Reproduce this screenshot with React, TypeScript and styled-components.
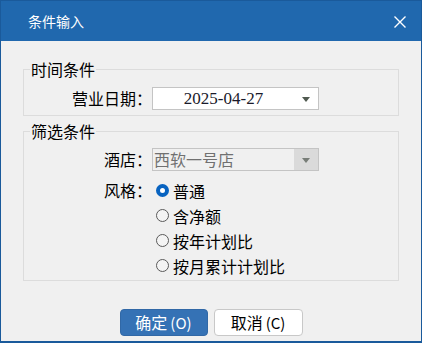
import React from 'react';
import styled, { createGlobalStyle } from 'styled-components';

const GlobalStyle = createGlobalStyle`
  html, body {
    margin: 0;
    padding: 0;
    background: #f0f0f0;
  }
  body {
    font-family: "Noto Sans CJK SC", "Noto Sans", sans-serif;
  }
`;

const styles = ['普通', '含净额', '按年计划比', '按月累计计划比'];

const App: React.FC = () => {
  const [style, setStyle] = React.useState(0);

  return (
    <>
      <GlobalStyle />
      <Window>
        <TitleBar>
          <Title>条件输入</Title>
          <CloseButton aria-label="关闭">
            <svg width="12" height="12" viewBox="0 0 12 12">
              <path d="M0.5 0.5 L11.5 11.5 M11.5 0.5 L0.5 11.5" stroke="#fff" strokeWidth="1.4" />
            </svg>
          </CloseButton>
        </TitleBar>

        <Body>
          <Group $pt={7} $pb={4}>
            <Legend>时间条件</Legend>
            <FormGrid>
              <Label>营业日期：</Label>
              <Combo>
                <DateValue>2025-04-27</DateValue>
                <ArrowBox>
                  <Arrow />
                </ArrowBox>
              </Combo>
            </FormGrid>
          </Group>

          <Group $pt={6} $pb={2}>
            <Legend>筛选条件</Legend>
            <FormGrid>
              <Label>酒店：</Label>
              <Combo $disabled>
                <HotelValue>西软一号店</HotelValue>
                <ArrowBox $disabled>
                  <Arrow $disabled />
                </ArrowBox>
              </Combo>
              <Label $top>风格：</Label>
              <RadioList>
                {styles.map((s, i) => (
                  <RadioRow key={s} onClick={() => setStyle(i)}>
                    <RadioDot $checked={style === i} />
                    <span>{s}</span>
                  </RadioRow>
                ))}
              </RadioList>
            </FormGrid>
          </Group>
        </Body>

        <Footer>
          <Button $primary>
            确定<Hotkey>(O)</Hotkey>
          </Button>
          <Button>
            取消<Hotkey>(C)</Hotkey>
          </Button>
        </Footer>
      </Window>
    </>
  );
};

const Window = styled.div`
  width: 422px;
  height: 343px;
  box-sizing: border-box;
  border: 1px solid #1a5a9b;
  border-bottom-width: 2px;
  background: #f0f0f0;
  display: flex;
  flex-direction: column;
  color: #000;
`;

const TitleBar = styled.div`
  height: 40px;
  flex-shrink: 0;
  background: #2068ae;
  display: flex;
  align-items: center;
  justify-content: space-between;
  padding: 0 15px 0 27px;
`;

const Title = styled.span`
  color: #fff;
  font-size: 14px;
  line-height: 20px;
`;

const CloseButton = styled.div`
  width: 12px;
  height: 12px;
  display: flex;
  margin-top: 1px;
`;

const Body = styled.div`
  padding: 18px 22px 0;
  display: flex;
  flex-direction: column;
  gap: 5px;
`;

const Group = styled.fieldset<{ $pt: number; $pb: number }>`
  margin: 0;
  min-width: 0;
  border: 1px solid #dcdcdc;
  padding: ${(p) => p.$pt}px 0 ${(p) => p.$pb}px;
`;

const Legend = styled.legend`
  margin-left: 6px;
  padding: 0 1px;
  font-size: 16px;
  line-height: 20px;
  color: #000;
`;

const FormGrid = styled.div`
  display: grid;
  grid-template-columns: 128px 167px;
  row-gap: 6px;
  align-items: center;
`;

const Label = styled.div<{ $top?: boolean }>`
  font-size: 16px;
  line-height: 25px;
  text-align: right;
  align-self: ${(p) => (p.$top ? 'start' : 'center')};
`;

const Combo = styled.div<{ $disabled?: boolean }>`
  height: 23px;
  box-sizing: border-box;
  border: 1px solid #c4c4c4;
  background: ${(p) => (p.$disabled ? '#f0f0f0' : '#fff')};
  display: flex;
  align-items: stretch;
`;

const DateValue = styled.div`
  flex: 1;
  text-align: center;
  font-family: "Liberation Serif", serif;
  font-size: 17px;
  line-height: 21px;
  color: #1a1a2a;
`;

const HotelValue = styled.div`
  flex: 1;
  padding-left: 1px;
  font-size: 16px;
  line-height: 21px;
  color: #707070;
`;

const ArrowBox = styled.div<{ $disabled?: boolean }>`
  width: 24px;
  display: flex;
  align-items: center;
  justify-content: center;
  background: ${(p) => (p.$disabled ? '#dadada' : 'transparent')};
`;

const Arrow = styled.div<{ $disabled?: boolean }>`
  width: 0;
  height: 0;
  border-left: 4.5px solid transparent;
  border-right: 4.5px solid transparent;
  border-top: 5px solid ${(p) => (p.$disabled ? '#777d77' : '#505a50')};
  margin-top: 1px;
`;

const RadioList = styled.div`
  display: flex;
  flex-direction: column;
`;

const RadioRow = styled.label`
  height: 25px;
  display: flex;
  align-items: center;
  gap: 4px;
  padding-left: 4px;
  font-size: 16px;
  cursor: default;
`;

const RadioDot = styled.span<{ $checked: boolean }>`
  width: 13px;
  height: 13px;
  box-sizing: border-box;
  border-radius: 50%;
  flex-shrink: 0;
  border: ${(p) => (p.$checked ? '4px solid #0863c0' : '1px solid #5a5a5a')};
  background: ${(p) => (p.$checked ? '#fff' : '#f4f4f4')};
`;

const Footer = styled.div`
  margin-top: auto;
  padding-bottom: 5px;
  display: flex;
  justify-content: center;
  gap: 6px;
`;

const Button = styled.button<{ $primary?: boolean }>`
  width: ${(p) => (p.$primary ? '88px' : '89px')};
  height: 27px;
  box-sizing: border-box;
  border-radius: 4px;
  font-family: "Noto Sans CJK SC", "Noto Sans", sans-serif;
  font-size: 16px;
  line-height: 20px;
  padding: 0;
  border: 1px solid ${(p) => (p.$primary ? '#3168a6' : '#c8c8c8')};
  background: ${(p) => (p.$primary ? '#3572b5' : '#fff')};
  color: ${(p) => (p.$primary ? '#fff' : '#000')};
`;

const Hotkey = styled.span`
  margin-left: 3px;
  font-size: 15px;
`;

export default App;
